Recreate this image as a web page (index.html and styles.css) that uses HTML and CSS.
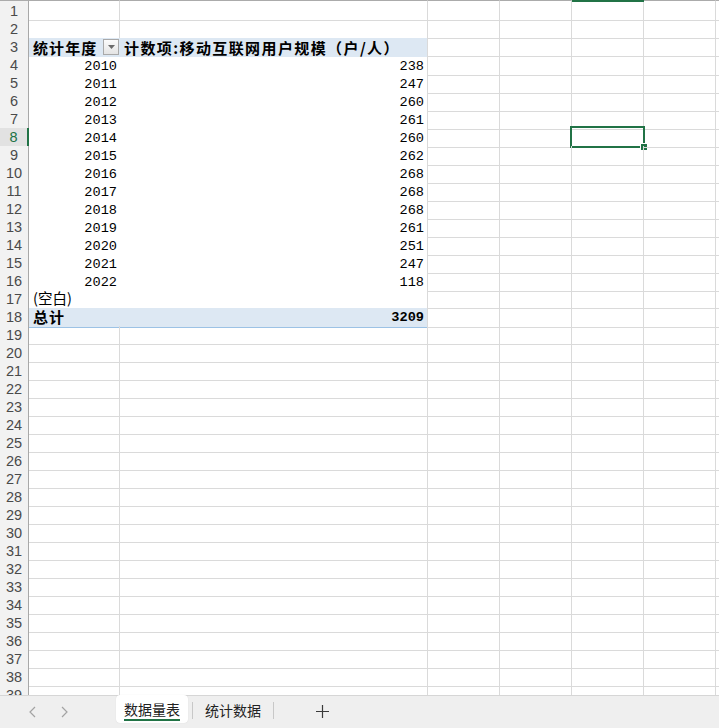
FILE: index.html
```html
<!DOCTYPE html>
<html lang="zh-CN">
<head>
<meta charset="utf-8">
<title>数据量表</title>
<link rel="stylesheet" href="styles.css">
</head>
<body>
<div class="app">
  <div class="sheet">
    <div class="row top"><div class="rh"></div><div class="c"></div><div class="c"></div><div class="c"></div><div class="c"></div><div class="c sel-col"></div><div class="c"></div><div class="c rest"></div></div>

    <div class="row"><div class="rh">1</div><div class="c"></div><div class="c"></div><div class="c"></div><div class="c"></div><div class="c"></div><div class="c"></div><div class="c rest"></div></div>
    <div class="row"><div class="rh">2</div><div class="c"></div><div class="c"></div><div class="c"></div><div class="c"></div><div class="c"></div><div class="c"></div><div class="c rest"></div></div>
    <div class="row"><div class="rh">3</div>
      <div class="c pa head"><span class="hd">统计年度</span><span class="dd"><svg width="7" height="4" viewBox="0 0 7 4"><path d="M0 0h7L3.5 4z" fill="#6b6b6b"/></svg></span></div>
      <div class="c pb head"><span class="hd wide">计数项:移动互联网用户规模（户/人）</span></div>
      <div class="c"></div><div class="c"></div><div class="c"></div><div class="c"></div><div class="c rest"></div></div>
    <div class="row"><div class="rh">4</div><div class="c pa num">2010</div><div class="c pb num">238</div><div class="c"></div><div class="c"></div><div class="c"></div><div class="c"></div><div class="c rest"></div></div>
    <div class="row"><div class="rh">5</div><div class="c pa num">2011</div><div class="c pb num">247</div><div class="c"></div><div class="c"></div><div class="c"></div><div class="c"></div><div class="c rest"></div></div>
    <div class="row"><div class="rh">6</div><div class="c pa num">2012</div><div class="c pb num">260</div><div class="c"></div><div class="c"></div><div class="c"></div><div class="c"></div><div class="c rest"></div></div>
    <div class="row"><div class="rh">7</div><div class="c pa num">2013</div><div class="c pb num">261</div><div class="c"></div><div class="c"></div><div class="c"></div><div class="c"></div><div class="c rest"></div></div>
    <div class="row"><div class="rh active">8</div><div class="c pa num">2014</div><div class="c pb num">260</div><div class="c"></div><div class="c"></div><div class="c selected"><span class="selbox"><span class="handle"></span></span></div><div class="c"></div><div class="c rest"></div></div>
    <div class="row"><div class="rh">9</div><div class="c pa num">2015</div><div class="c pb num">262</div><div class="c"></div><div class="c"></div><div class="c"></div><div class="c"></div><div class="c rest"></div></div>
    <div class="row"><div class="rh">10</div><div class="c pa num">2016</div><div class="c pb num">268</div><div class="c"></div><div class="c"></div><div class="c"></div><div class="c"></div><div class="c rest"></div></div>
    <div class="row"><div class="rh">11</div><div class="c pa num">2017</div><div class="c pb num">268</div><div class="c"></div><div class="c"></div><div class="c"></div><div class="c"></div><div class="c rest"></div></div>
    <div class="row"><div class="rh">12</div><div class="c pa num">2018</div><div class="c pb num">268</div><div class="c"></div><div class="c"></div><div class="c"></div><div class="c"></div><div class="c rest"></div></div>
    <div class="row"><div class="rh">13</div><div class="c pa num">2019</div><div class="c pb num">261</div><div class="c"></div><div class="c"></div><div class="c"></div><div class="c"></div><div class="c rest"></div></div>
    <div class="row"><div class="rh">14</div><div class="c pa num">2020</div><div class="c pb num">251</div><div class="c"></div><div class="c"></div><div class="c"></div><div class="c"></div><div class="c rest"></div></div>
    <div class="row"><div class="rh">15</div><div class="c pa num">2021</div><div class="c pb num">247</div><div class="c"></div><div class="c"></div><div class="c"></div><div class="c"></div><div class="c rest"></div></div>
    <div class="row"><div class="rh">16</div><div class="c pa num">2022</div><div class="c pb num">118</div><div class="c"></div><div class="c"></div><div class="c"></div><div class="c"></div><div class="c rest"></div></div>
    <div class="row"><div class="rh">17</div><div class="c pa blank line-b">(空白)</div><div class="c pb line-b"></div><div class="c"></div><div class="c"></div><div class="c"></div><div class="c"></div><div class="c rest"></div></div>
    <div class="row"><div class="rh">18</div><div class="c pa total line-b"><span class="hd">总计</span></div><div class="c pb total line-b num bold">3209</div><div class="c"></div><div class="c"></div><div class="c"></div><div class="c"></div><div class="c rest"></div></div>
    <div class="row"><div class="rh">19</div><div class="c"></div><div class="c"></div><div class="c"></div><div class="c"></div><div class="c"></div><div class="c"></div><div class="c rest"></div></div>
    <div class="row"><div class="rh">20</div><div class="c"></div><div class="c"></div><div class="c"></div><div class="c"></div><div class="c"></div><div class="c"></div><div class="c rest"></div></div>
    <div class="row"><div class="rh">21</div><div class="c"></div><div class="c"></div><div class="c"></div><div class="c"></div><div class="c"></div><div class="c"></div><div class="c rest"></div></div>
    <div class="row"><div class="rh">22</div><div class="c"></div><div class="c"></div><div class="c"></div><div class="c"></div><div class="c"></div><div class="c"></div><div class="c rest"></div></div>
    <div class="row"><div class="rh">23</div><div class="c"></div><div class="c"></div><div class="c"></div><div class="c"></div><div class="c"></div><div class="c"></div><div class="c rest"></div></div>
    <div class="row"><div class="rh">24</div><div class="c"></div><div class="c"></div><div class="c"></div><div class="c"></div><div class="c"></div><div class="c"></div><div class="c rest"></div></div>
    <div class="row"><div class="rh">25</div><div class="c"></div><div class="c"></div><div class="c"></div><div class="c"></div><div class="c"></div><div class="c"></div><div class="c rest"></div></div>
    <div class="row"><div class="rh">26</div><div class="c"></div><div class="c"></div><div class="c"></div><div class="c"></div><div class="c"></div><div class="c"></div><div class="c rest"></div></div>
    <div class="row"><div class="rh">27</div><div class="c"></div><div class="c"></div><div class="c"></div><div class="c"></div><div class="c"></div><div class="c"></div><div class="c rest"></div></div>
    <div class="row"><div class="rh">28</div><div class="c"></div><div class="c"></div><div class="c"></div><div class="c"></div><div class="c"></div><div class="c"></div><div class="c rest"></div></div>
    <div class="row"><div class="rh">29</div><div class="c"></div><div class="c"></div><div class="c"></div><div class="c"></div><div class="c"></div><div class="c"></div><div class="c rest"></div></div>
    <div class="row"><div class="rh">30</div><div class="c"></div><div class="c"></div><div class="c"></div><div class="c"></div><div class="c"></div><div class="c"></div><div class="c rest"></div></div>
    <div class="row"><div class="rh">31</div><div class="c"></div><div class="c"></div><div class="c"></div><div class="c"></div><div class="c"></div><div class="c"></div><div class="c rest"></div></div>
    <div class="row"><div class="rh">32</div><div class="c"></div><div class="c"></div><div class="c"></div><div class="c"></div><div class="c"></div><div class="c"></div><div class="c rest"></div></div>
    <div class="row"><div class="rh">33</div><div class="c"></div><div class="c"></div><div class="c"></div><div class="c"></div><div class="c"></div><div class="c"></div><div class="c rest"></div></div>
    <div class="row"><div class="rh">34</div><div class="c"></div><div class="c"></div><div class="c"></div><div class="c"></div><div class="c"></div><div class="c"></div><div class="c rest"></div></div>
    <div class="row"><div class="rh">35</div><div class="c"></div><div class="c"></div><div class="c"></div><div class="c"></div><div class="c"></div><div class="c"></div><div class="c rest"></div></div>
    <div class="row"><div class="rh">36</div><div class="c"></div><div class="c"></div><div class="c"></div><div class="c"></div><div class="c"></div><div class="c"></div><div class="c rest"></div></div>
    <div class="row"><div class="rh">37</div><div class="c"></div><div class="c"></div><div class="c"></div><div class="c"></div><div class="c"></div><div class="c"></div><div class="c rest"></div></div>
    <div class="row"><div class="rh">38</div><div class="c"></div><div class="c"></div><div class="c"></div><div class="c"></div><div class="c"></div><div class="c"></div><div class="c rest"></div></div>
    <div class="row"><div class="rh">39</div><div class="c"></div><div class="c"></div><div class="c"></div><div class="c"></div><div class="c"></div><div class="c"></div><div class="c rest"></div></div>
  </div>

  <div class="tabbar">
    <div class="nav">
      <span class="arrow"><svg width="7" height="12" viewBox="0 0 7 12"><path d="M6 1L1 6l5 5" fill="none" stroke="#a3a3a3" stroke-width="1.2"/></svg></span>
      <span class="arrow"><svg width="7" height="12" viewBox="0 0 7 12"><path d="M1 1l5 5-5 5" fill="none" stroke="#a3a3a3" stroke-width="1.2"/></svg></span>
    </div>
    <div class="tab active-tab"><span class="tab-label">数据量表</span></div>
    <span class="sep"></span>
    <div class="tab"><span class="tab-label">统计数据</span></div>
    <span class="sep"></span>
    <div class="add"><svg width="13" height="13" viewBox="0 0 13 13"><path d="M6.5 0v13M0 6.5h13" stroke="#3a3a3a" stroke-width="1.2"/></svg></div>
  </div>
</div>
</body>
</html>
```

FILE: styles.css
```css
* { box-sizing: border-box; }
html, body { margin: 0; padding: 0; background: #fff; }
body {
  font-family: "Liberation Sans", "Noto Sans CJK SC", sans-serif;
  color: #000;
}
.app {
  width: 719px;
  height: 728px;
  display: flex;
  flex-direction: column;
  overflow: hidden;
}
.sheet {
  flex: 1;
  overflow: hidden;
  min-height: 0;
}
.row {
  display: grid;
  grid-template-columns: 29px 91px 308px 72px 72px 72px 72px 1fr;
  height: 18px;
}
.row.top { height: 2px; }
.row.top > div {
  border-top: 1px solid #ababab;
  border-bottom: none;
  background: #fff;
}
.row.top > .rh { background: #f2f2f2; }
.row.top > .sel-col {
  border-top: none;
  background: #217346;
  border-right: none;
}
.rh {
  background: #f2f2f2;
  border-right: 1px solid #a8a8a8;
  border-bottom: 1px solid #dedede;
  color: #4a4a4a;
  font-family: "Liberation Sans", sans-serif;
  font-size: 14.5px;
  line-height: 18px;
  text-align: center;
}
.rh.active {
  background: #e2e2e2;
  color: #217346;
  border-right: 2px solid #217346;
}
.c {
  border-right: 1px solid #dadada;
  border-bottom: 1px solid #dadada;
  font-size: 14px;
  line-height: 17px;
  white-space: nowrap;
  overflow: visible;
  position: relative;
}
.c.rest { border-right: none; }
.c.pa { border-right: none; border-bottom-color: transparent; padding-left: 4px; }
.c.pb { border-bottom-color: transparent; }
.num {
  font-family: "Liberation Mono", monospace;
  font-size: 13.6px;
  text-align: right;
  padding-right: 3px;
  padding-top: 2px;
}
.c.pa.num { padding-right: 3px; }
.c.total.num { padding-top: 1px; }
.head {
  background: #dde8f3;
  display: flex;
  align-items: center;
}
.c.pb.head { padding-left: 4px; }
.hd {
  font-family: "Noto Sans CJK SC", sans-serif;
  font-weight: 700;
  font-size: 15px;
  letter-spacing: 1.1px;
  line-height: 17px;
}
.hd.wide { letter-spacing: 1.4px; }
.dd {
  margin-left: auto;
  margin-right: 1px;
  width: 16px;
  height: 16px;
  border: 1px solid #a9a9a9;
  background: linear-gradient(#fbfbfb, #e4e4e4);
  display: flex;
  align-items: center;
  justify-content: center;
}
.blank {
  font-family: "Noto Sans CJK SC", sans-serif;
  font-size: 14.5px;
  line-height: 16px;
  padding-left: 4px;
}
.c.line-b { border-bottom: 1px solid #9cc2e5; }
.total {
  background: #dde8f3;
}
.bold { font-weight: 700; }
.selbox {
  position: absolute;
  left: -2px;
  top: -2px;
  right: -2px;
  bottom: -1px;
  border: 2px solid #217346;
}
.handle {
  position: absolute;
  right: -5px;
  bottom: -5px;
  width: 8px;
  height: 8px;
  background: #217346;
  border: 1px solid #fff;
}

.tabbar {
  height: 33px;
  flex: none;
  background: #efefef;
  border-top: 1px solid #d6d6d6;
  display: flex;
  align-items: flex-start;
  font-family: "Noto Sans CJK SC", sans-serif;
  font-size: 14px;
  color: #222;
}
.nav {
  width: 116px;
  height: 31px;
  padding-left: 16px;
  display: flex;
  align-items: center;
}
.arrow {
  width: 32px;
  display: flex;
  justify-content: center;
}
.tab {
  height: 28px;
  padding: 0 12px;
  display: flex;
  align-items: center;
}
.active-tab {
  width: 72px;
  margin-top: -1px;
  height: 28px;
  background: #fff;
  border-radius: 4px;
  box-shadow: 0 0 1px rgba(0,0,0,0.15);
  justify-content: center;
  padding: 0;
  margin-right: 4px;
}
.tab-label {
  line-height: 20px;
  letter-spacing: 0;
}
.active-tab .tab-label {
  border-bottom: 2px solid #217346;
  padding-bottom: 0;
  margin-top: 2px;
}
.sep {
  width: 1px;
  height: 17px;
  margin-top: 6px;
  background: #c8c8c8;
}
.add {
  width: 96px;
  height: 30px;
  display: flex;
  align-items: center;
  justify-content: center;
}
```
